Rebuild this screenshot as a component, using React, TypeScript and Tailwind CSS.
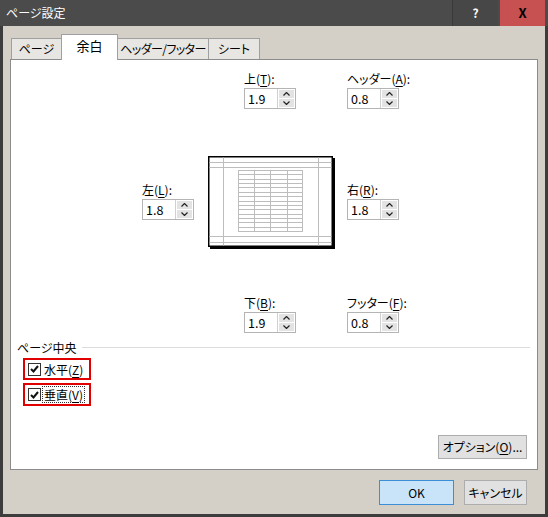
import React from "react";

type FieldProps = { name: string; k: string; value: string };

const Chevron = ({ up }: { up?: boolean }) => (
  <svg width="7" height="4" viewBox="0 0 7 4" className="block">
    {up ? (
      <path d="M0.5 3.5 L3.5 0.5 L6.5 3.5" fill="none" stroke="#222" strokeWidth="1.2" />
    ) : (
      <path d="M0.5 0.5 L3.5 3.5 L6.5 0.5" fill="none" stroke="#222" strokeWidth="1.2" />
    )}
  </svg>
);

const Spin = ({ value }: { value: string }) => (
  <div className="flex h-[21px] w-[52px] border border-[#b4b4b4] bg-white">
    <div className="flex-1 pl-[3px] text-[12.5px] leading-[19px] text-black">{value}</div>
    <div className="flex w-[18px] flex-col gap-px border-l border-[#d0d0d0] p-px">
      <div className="flex flex-1 items-center justify-center bg-[#e3e3e3]">
        <Chevron up />
      </div>
      <div className="flex flex-1 items-center justify-center bg-[#e3e3e3]">
        <Chevron />
      </div>
    </div>
  </div>
);

const Field = ({ name, k, value }: FieldProps) => (
  <div className="flex flex-col gap-[2px]">
    <div className="whitespace-nowrap text-[12px] leading-[15px] text-black">
      {name}(<span className="underline underline-offset-2">{k}</span>):
    </div>
    <Spin value={value} />
  </div>
);

const CheckMark = () => (
  <div className="flex h-[13px] w-[13px] items-center justify-center border border-[#333] bg-white">
    <svg width="9" height="8" viewBox="0 0 9 8">
      <path d="M1 4 L3.5 6.5 L8 1" fill="none" stroke="#111" strokeWidth="2" />
    </svg>
  </div>
);

// page preview drawing
const Preview = () => {
  const rows = Array.from({ length: 15 }, (_, i) => 14 + (i * 61) / 14);
  return (
    <svg width="128" height="94" viewBox="0 0 128 94" className="block shrink-0">
      <rect x="2" y="2" width="125" height="91" fill="#000" />
      <rect x="0.75" y="0.75" width="123.5" height="89.5" fill="#fff" stroke="#000" strokeWidth="1.5" />
      <g stroke="#bdbdbd" strokeWidth="1" fill="none">
        <line x1="1.5" y1="6.5" x2="123.5" y2="6.5" />
        <line x1="1.5" y1="11.5" x2="123.5" y2="11.5" />
        <line x1="1.5" y1="80.5" x2="123.5" y2="80.5" />
        <line x1="1.5" y1="86.5" x2="123.5" y2="86.5" />
        <line x1="15.5" y1="1.5" x2="15.5" y2="89.5" />
        <line x1="110.5" y1="1.5" x2="110.5" y2="89.5" />
        <rect x="30.5" y="14.5" width="64" height="61" />
        {[46.5, 62.5, 79.5].map((x) => (
          <line key={x} x1={x} y1="14.5" x2={x} y2="75.5" />
        ))}
        {rows.map((y) => (
          <line key={y} x1="30.5" y1={Math.round(y) + 0.5} x2="94.5" y2={Math.round(y) + 0.5} />
        ))}
      </g>
    </svg>
  );
};

const App = () => {
  return (
    <div className="flex h-[517px] w-[548px] flex-col bg-[#3c3c3c] font-['Noto_Sans_CJK_JP',sans-serif] [font-feature-settings:'palt'] select-none">
      {/* Title bar */}
      <div className="flex h-[26px] shrink-0 items-stretch bg-[#4b4b4b]">
        <div className="flex-1 pl-[6px] text-[12px] leading-[26px] text-white">ページ設定</div>
        <div className="flex w-[46px] items-center justify-center border-l border-[#3a3a3a] bg-[#474747] text-[12px] font-bold text-white">
          ?
        </div>
        <div className="ml-[2px] mr-[3px] flex w-[45px] items-center justify-center bg-[#c75050] text-[13px] font-bold text-black">
          X
        </div>
      </div>

      {/* Body */}
      <div className="mx-[3px] mb-[3px] flex flex-1 flex-col bg-[#d4d0c8]">
        {/* Tabs */}
        <div className="mt-[9px] flex h-[24px] items-end whitespace-nowrap pl-[8px] text-[12px] text-black">
          <div className="flex h-[21px] w-[51px] items-center justify-center border border-b-0 border-[#a0a0a0] bg-[#e8e6e2]">
            ページ
          </div>
          <div className="relative z-10 -mb-px -ml-px flex h-[26px] w-[57px] items-center justify-center border border-b-0 border-[#a0a0a0] bg-white pb-[3px] text-[13px]">
            余白
          </div>
          <div className="-ml-px flex h-[21px] w-[92px] items-center justify-center border border-b-0 border-[#a0a0a0] bg-[#e8e6e2] tracking-[-0.6px]">
            ヘッダー/フッター
          </div>
          <div className="-ml-px flex h-[21px] w-[52px] items-center justify-center border border-b-0 border-[#a0a0a0] bg-[#e8e6e2]">
            シート
          </div>
        </div>

        {/* Panel */}
        <div className="ml-[7px] flex h-[411px] w-[528px] flex-col border border-[#8c8c8c] bg-white text-black">
          <div className="ml-[233px] mt-[11px] flex gap-[51px]">
            <Field name="上" k="T" value="1.9" />
            <Field name="ヘッダー" k="A" value="0.8" />
          </div>

          <div className="ml-[131px] mt-[47px] flex items-start">
            <div className="mt-[26px]">
              <Field name="左" k="L" value="1.8" />
            </div>
            <div className="ml-[14px]">
              <Preview />
            </div>
            <div className="ml-[11px] mt-[26px]">
              <Field name="右" k="R" value="1.8" />
            </div>
          </div>

          <div className="ml-[233px] mt-[45px] flex gap-[51px]">
            <Field name="下" k="B" value="1.9" />
            <Field name="フッター" k="F" value="0.8" />
          </div>

          <div className="ml-[6px] mr-[7px] mt-[7px] flex items-center gap-[5px]">
            <span className="text-[12px] leading-[15px]">ページ中央</span>
            <div className="h-px flex-1 bg-[#dcdcdc]" />
          </div>

          <div className="ml-[12px] mt-[3px] flex h-[22px] w-[68px] items-center gap-[3px] border-2 border-[#e00000] pl-[3px]">
            <CheckMark />
            <span className="whitespace-nowrap text-[12px] leading-[15px]">
              水平(<span className="underline underline-offset-2">Z</span>)
            </span>
          </div>
          <div className="ml-[12px] mt-[3px] flex h-[23px] w-[68px] items-center gap-px border-2 border-[#e00000] pl-[3px]">
            <CheckMark />
            <span className="whitespace-nowrap border border-dotted border-[#333] px-px text-[12px] leading-[15px]">
              垂直(<span className="underline underline-offset-2">V</span>)
            </span>
          </div>

          <div className="mr-[10px] mt-[29px] flex justify-end">
            <div className="flex h-[24px] w-[89px] items-center justify-center whitespace-nowrap border border-[#adadad] bg-[#e1e1e1] text-[12px]">
              オプション(<span className="underline underline-offset-2">O</span>)...
            </div>
          </div>
        </div>

        {/* Dialog buttons */}
        <div className="mr-[18px] mt-[10px] flex justify-end gap-[10px] whitespace-nowrap text-[12px] text-black">
          <div className="flex h-[25px] w-[75px] items-center justify-center border border-[#3c8fd6] bg-[#c9e3f8]">
            OK
          </div>
          <div className="flex h-[25px] w-[63px] items-center justify-center border border-[#adadad] bg-[#e1e1e1]">
            キャンセル
          </div>
        </div>
      </div>
    </div>
  );
};

export default App;
